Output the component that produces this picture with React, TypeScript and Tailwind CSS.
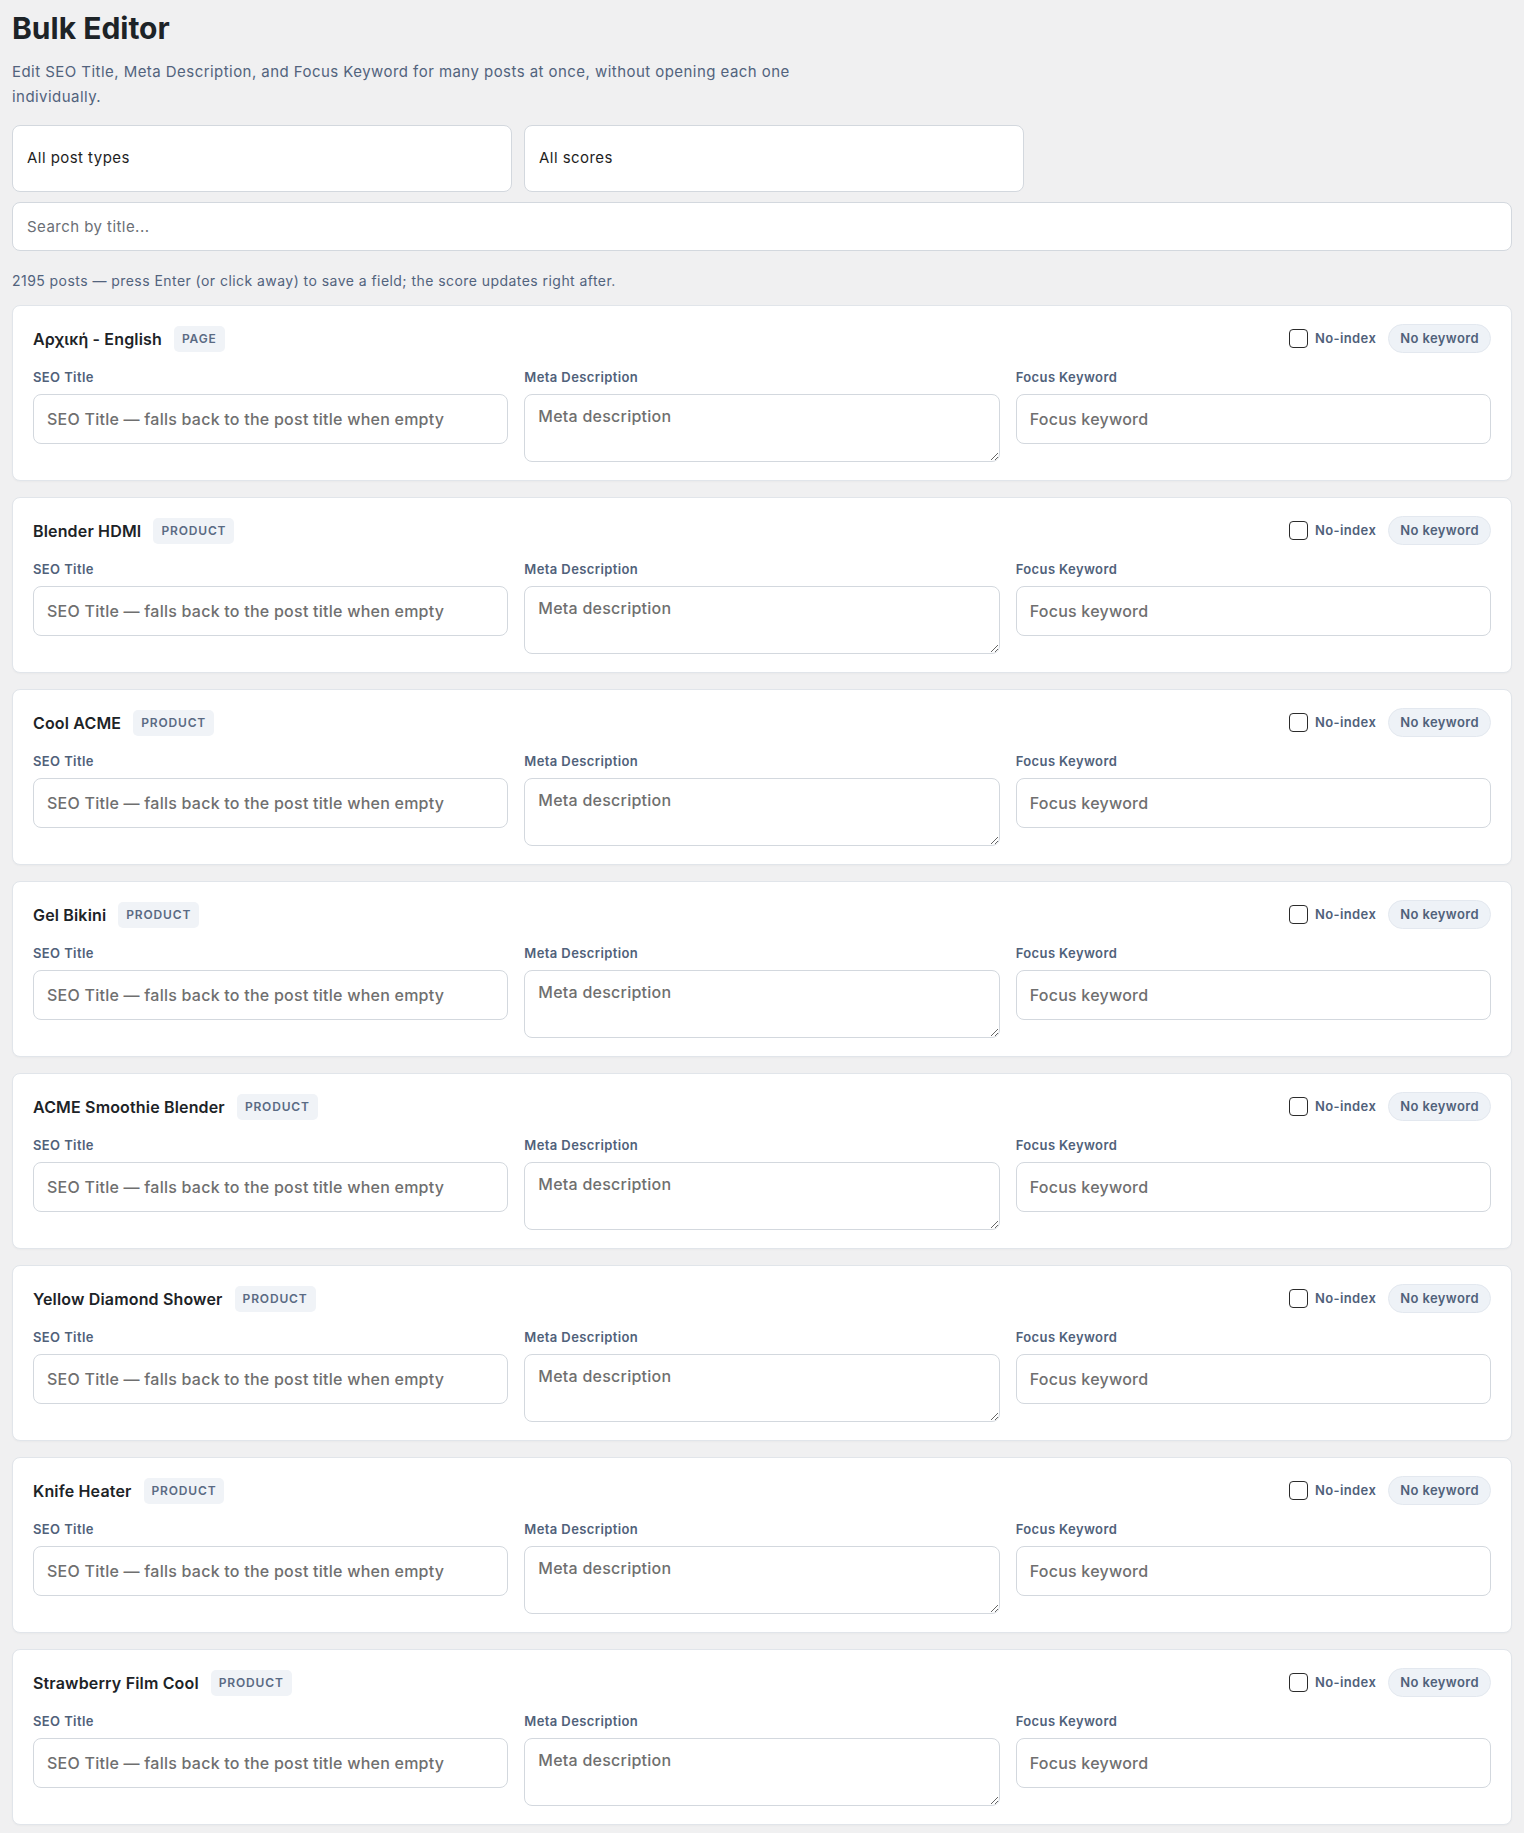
import React from "react"

type Post = {
  id: number
  title: string
  type: "page" | "product"
}

const posts: Post[] = [
  { id: 1, title: "Αρχική - English", type: "page" },
  { id: 2, title: "Blender HDMI", type: "product" },
  { id: 3, title: "Cool ACME", type: "product" },
  { id: 4, title: "Gel Bikini", type: "product" },
  { id: 5, title: "ACME Smoothie Blender", type: "product" },
  { id: 6, title: "Yellow Diamond Shower", type: "product" },
  { id: 7, title: "Knife Heater", type: "product" },
  { id: 8, title: "Strawberry Film Cool", type: "product" },
]

const fieldClass =
  "w-full rounded-[8px] border border-[#d3d8de] bg-white px-[13px] text-[16px] font-medium tracking-[0.015em] text-[#1e1e1e] placeholder:text-[#6f6f6f] outline-none"

const labelClass = "mb-2 text-[13px] font-semibold leading-[18px] tracking-[0.03em] text-[#50617a]"

function PostCard({ post }: { post: Post }) {
  return (
    <div className="rounded-[8px] border border-[#e1e5ea] bg-white px-5 py-[18px] shadow-[0_1px_2px_rgba(0,0,0,0.03)]">
      {/* Header */}
      <div className="flex h-[29px] items-center justify-between">
        <div className="flex items-center gap-[12px]">
          <span className="text-[16px] font-semibold tracking-[0.01em] text-[#1d2327]">{post.title}</span>
          <span className="rounded-[5px] bg-[#f0f3f7] px-2 py-1 text-[12px] font-semibold leading-[18px] tracking-[0.07em] text-[#5a6a83] uppercase">
            {post.type}
          </span>
        </div>
        <div className="flex items-center gap-[12px]">
          <label className="flex items-center gap-[7px] text-[13px] font-semibold tracking-[0.03em] text-[#50617a]">
            <input
              type="checkbox"
              className="h-[19px] w-[19px] appearance-none rounded-[4px] border-[1.5px] border-[#2b2b2b] bg-white"
            />
            No-index
          </label>
          <span className="flex h-[29px] items-center rounded-full border border-[#e3e8ef] bg-[#eef2f7] px-[11px] text-[13px] font-semibold tracking-[0.03em] text-[#50617a]">
            No keyword
          </span>
        </div>
      </div>

      {/* Fields */}
      <div className="mt-[15px] grid grid-cols-3 gap-4">
        <div>
          <div className={labelClass}>SEO Title</div>
          <input className={`${fieldClass} h-[50px]`} placeholder="SEO Title — falls back to the post title when empty" />
        </div>
        <div>
          <div className={labelClass}>Meta Description</div>
          <textarea
            className={`${fieldClass} block h-[68px] resize-y py-[10px] leading-[22px]`}
            placeholder="Meta description"
          />
        </div>
        <div>
          <div className={labelClass}>Focus Keyword</div>
          <input className={`${fieldClass} h-[50px]`} placeholder="Focus keyword" />
        </div>
      </div>
    </div>
  )
}

export default function App() {
  return (
    <div className="min-h-screen bg-[#f0f0f1] px-3 pt-[10px] pb-[8px] font-['Inter',_'Noto_Sans',_sans-serif]">
      <h1 className="text-[30px] font-bold leading-[36px] text-[#1d2327]">Bulk Editor</h1>
      <p className="mt-[14px] max-w-[840px] text-[15px] leading-[24.5px] tracking-[0.03em] text-[#52637d]">
        Edit SEO Title, Meta Description, and Focus Keyword for many posts at once, without opening each one
        individually.
      </p>

      {/* Filters */}
      <div className="mt-[16px] flex gap-3">
        <select className="h-[67px] w-[500px] appearance-none rounded-[8px] border border-[#d3d8de] bg-white px-[14px] text-[15px] tracking-[0.03em] text-[#1e1e1e] outline-none">
          <option>All post types</option>
          <option>Pages</option>
          <option>Products</option>
        </select>
        <select className="h-[67px] w-[500px] appearance-none rounded-[8px] border border-[#d3d8de] bg-white px-[14px] text-[15px] tracking-[0.03em] text-[#1e1e1e] outline-none">
          <option>All scores</option>
          <option>Good</option>
          <option>Needs work</option>
        </select>
      </div>
      <input
        className="mt-[10px] h-[49px] w-full rounded-[8px] border border-[#d3d8de] bg-white px-[14px] text-[15px] tracking-[0.03em] text-[#1e1e1e] placeholder:text-[#6b6f76] outline-none"
        placeholder="Search by title..."
      />

      <p className="mt-[20px] text-[14px] leading-[20px] tracking-[0.032em] text-[#52637d]">
        2195 posts — press Enter (or click away) to save a field; the score updates right after.
      </p>

      {/* Post list */}
      <div className="mt-[14px] flex flex-col gap-4">
        {posts.map(post => (
          <PostCard key={post.id} post={post} />
        ))}
      </div>
    </div>
  )
}
